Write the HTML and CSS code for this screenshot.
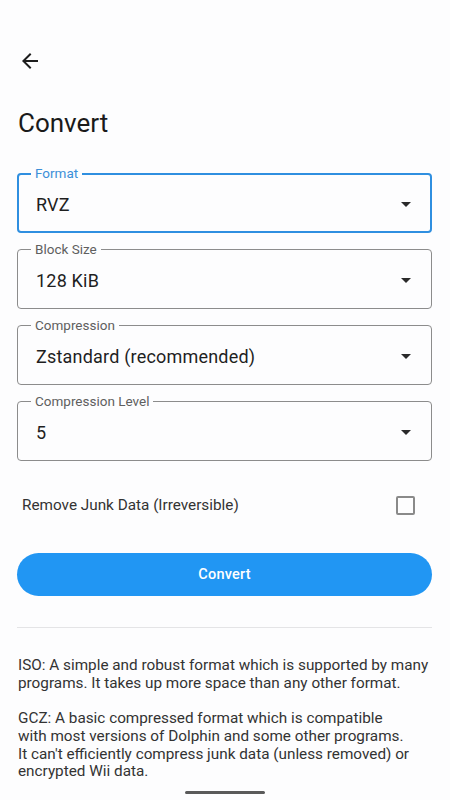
FILE: index.html
```html
<!DOCTYPE html>
<html lang="en">
<head>
<meta charset="utf-8">
<title>Convert</title>
<link rel="stylesheet" href="styles.css">
</head>
<body>
<div class="screen">
  <header class="topbar">
    <svg class="back" viewBox="0 0 24 24" width="24" height="24" aria-hidden="true">
      <path d="M20 11H7.83l5.59-5.59L12 4l-8 8 8 8 1.41-1.41L7.83 13H20v-2z"/>
    </svg>
  </header>
  <h1 class="title">Convert</h1>

  <div class="fields">
    <div class="field focused">
      <span class="label">Format</span>
      <span class="value">RVZ</span>
      <svg class="caret" viewBox="0 0 24 24" width="24" height="24" aria-hidden="true"><path d="M7 10l5 5 5-5z"/></svg>
    </div>
    <div class="field">
      <span class="label">Block Size</span>
      <span class="value">128 KiB</span>
      <svg class="caret" viewBox="0 0 24 24" width="24" height="24" aria-hidden="true"><path d="M7 10l5 5 5-5z"/></svg>
    </div>
    <div class="field">
      <span class="label">Compression</span>
      <span class="value">Zstandard (recommended)</span>
      <svg class="caret" viewBox="0 0 24 24" width="24" height="24" aria-hidden="true"><path d="M7 10l5 5 5-5z"/></svg>
    </div>
    <div class="field">
      <span class="label">Compression Level</span>
      <span class="value">5</span>
      <svg class="caret" viewBox="0 0 24 24" width="24" height="24" aria-hidden="true"><path d="M7 10l5 5 5-5z"/></svg>
    </div>
  </div>

  <div class="check-row">
    <span class="check-text">Remove Junk Data (Irreversible)</span>
    <span class="checkbox"></span>
  </div>

  <button class="convert-btn">Convert</button>

  <hr class="divider">

  <div class="desc">
    <p>ISO: A simple and robust format which is supported by many programs. It takes up more space than any other format.</p>
    <p>GCZ: A basic compressed format which is compatible<br>with most versions of Dolphin and some other programs.<br>It can't efficiently compress junk data (unless removed) or<br>encrypted Wii data.</p>
  </div>
</div>
<div class="home-indicator"></div>
</body>
</html>
```

FILE: styles.css
```css
html, body {
  margin: 0;
  padding: 0;
  background: #fdfdfe;
}
body {
  font-family: Roboto, "Noto Sans", "Liberation Sans", sans-serif;
  color: #1f1f1f;
  width: 450px;
  height: 800px;
  overflow: hidden;
}
.screen {
  display: flex;
  flex-direction: column;
  padding: 49px 18px 0 17px;
}
.topbar {
  display: flex;
  align-items: center;
  height: 24px;
}
.back {
  fill: #1d1d1d;
  margin-left: 1px;
}
.title {
  margin: 34px 0 0 1px;
  font-size: 26px;
  line-height: 32px;
  font-weight: 400;
  color: #1a1a1a;
}
.fields {
  display: flex;
  flex-direction: column;
  gap: 16px;
  margin-top: 34px;
}
.field {
  position: relative;
  box-sizing: border-box;
  height: 60px;
  border: 1px solid #8c8c8c;
  border-radius: 4px;
  display: flex;
  align-items: center;
  padding: 2px 13px 0 18px;
}
.field.focused {
  border: 2px solid #2f8fe0;
  padding-left: 17px;
  padding-right: 12px;
}
.label {
  position: absolute;
  top: -9px;
  left: 13px;
  padding: 0 4px;
  background: #fdfdfe;
  font-size: 13.5px;
  line-height: 16px;
  color: #5f5f5f;
}
.field.focused .label {
  top: -10px;
  left: 12px;
  color: #3b8fd8;
}
.value {
  font-size: 18px;
  color: #1f1f1f;
  letter-spacing: 0.2px;
}
.caret {
  margin-left: auto;
  fill: #2a2a2a;
}
.check-row {
  display: flex;
  align-items: center;
  justify-content: space-between;
  height: 48px;
  margin-top: 20px;
  padding: 0 17px 0 5px;
}
.check-text {
  font-size: 15.3px;
  color: #333;
}
.checkbox {
  box-sizing: border-box;
  width: 19px;
  height: 19px;
  border: 2px solid #8a8a8a;
  border-radius: 2px;
}
.convert-btn {
  margin-top: 24px;
  height: 43px;
  border: none;
  border-radius: 22px;
  background: #2196f3;
  color: #fff;
  font-family: inherit;
  font-size: 14.5px;
  font-weight: 500;
  letter-spacing: 0.2px;
}
.divider {
  margin: 31px 0 0 0;
  border: none;
  height: 1px;
  background: #e4e4e6;
}
.desc {
  margin-top: 29px;
  margin-left: 1px;
  font-size: 15.3px;
  line-height: 17.7px;
  color: #333;
}
.desc p {
  margin: 0 0 17.7px 0;
}
.home-indicator {
  position: fixed;
  left: 185px;
  bottom: 6px;
  width: 80px;
  height: 3px;
  border-radius: 2px;
  background: #5a5a5a;
}
```
